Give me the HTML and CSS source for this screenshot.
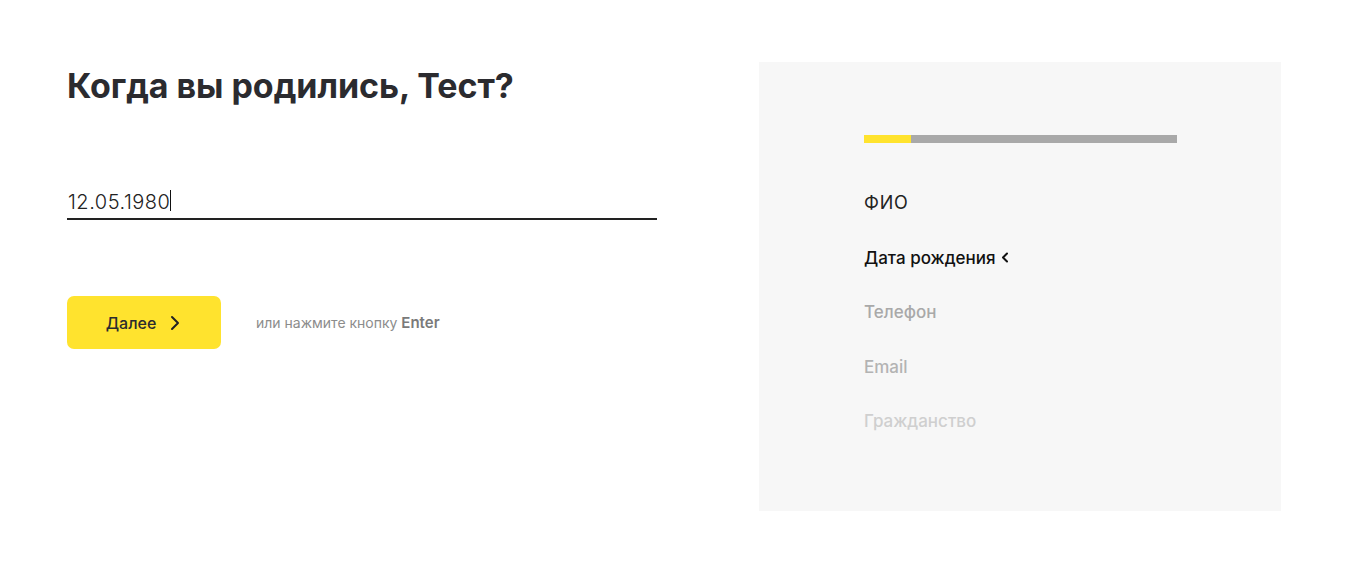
FILE: index.html
```html
<!DOCTYPE html>
<html lang="ru">
<head>
    <meta charset="UTF-8">
    <title>Анкета</title>
    <link rel="stylesheet" href="styles.css">
</head>
<body>
    <div class="page">
        <div class="form">
            <h1 class="title">Когда вы родились, Тест?</h1>

            <div class="field">
                <span class="field-value">12.05.1980</span><span class="caret"></span>
            </div>

            <div class="actions">
                <button class="next" type="button">
                    <span>Далее</span>
                    <svg width="10" height="16" viewBox="0 0 10 16" fill="none" stroke="#222" stroke-width="2" stroke-linecap="round" stroke-linejoin="round">
                        <polyline points="2 2 8 8 2 14"/>
                    </svg>
                </button>
                <p class="hint">или нажмите кнопку <b>Enter</b></p>
            </div>
        </div>

        <div class="steps">
            <div class="progress"><div class="progress-fill"></div></div>
            <ul class="step-list">
                <li class="step done">ФИО</li>
                <li class="step current">Дата рождения
                    <svg width="8" height="11" viewBox="0 0 8 11" fill="none" stroke="#111" stroke-width="2" stroke-linecap="round" stroke-linejoin="round">
                        <polyline points="6 1.5 2 5.5 6 9.5"/>
                    </svg>
                </li>
                <li class="step next1">Телефон</li>
                <li class="step next2">Email</li>
                <li class="step next3">Гражданство</li>
            </ul>
        </div>
    </div>
</body>
</html>
```

FILE: styles.css
```css
body {
    margin: 0;
    background-color: #fff;
    font-family: Inter, "Noto Sans", sans-serif;
    color: #2b2b2f;
}
.page {
    display: flex;
    padding: 62px 0 0 67px;
    gap: 102px;
}
.form {
    width: 590px;
}
.title {
    margin: 0;
    padding-top: 2px;
    font-size: 34px;
    line-height: 44px;
    font-weight: 700;
    letter-spacing: -0.05px;
    color: #2b2b2f;
}
.field {
    margin-top: 77px;
    height: 30px;
    padding: 3px 0 0 1px;
    border-bottom: 2px solid #222;
    display: flex;
    align-items: flex-start;
}
.field-value {
    font-size: 20px;
    line-height: 28px;
    font-weight: 300;
    color: #222;
    letter-spacing: 0.5px;
}
.caret {
    display: inline-block;
    width: 1px;
    height: 21px;
    margin-top: 2px;
    background-color: #111;
}
.actions {
    display: flex;
    align-items: center;
    margin-top: 76px;
    gap: 35px;
}
.next {
    width: 154px;
    height: 53px;
    border: none;
    border-radius: 7px;
    background-color: #ffe32e;
    display: flex;
    justify-content: center;
    align-items: center;
    gap: 14px;
    font-family: Inter, "Noto Sans", sans-serif;
    font-size: 16px;
    font-weight: 500;
    color: #2b2b2f;
    cursor: pointer;
    padding: 0 2px 0 0;
}
.hint {
    margin: 0;
    font-size: 14px;
    color: #8c8c8c;
}
.hint b {
    font-size: 15px;
    font-weight: 600;
    color: #7a7a7a;
}
.steps {
    width: 417px;
    height: 376px;
    background-color: #f7f7f7;
    padding: 73px 0 0 105px;
}
.progress {
    width: 313px;
    height: 8px;
    background-color: #a9a9a9;
}
.progress-fill {
    width: 47px;
    height: 100%;
    background-color: #ffe32e;
}
.step-list {
    list-style: none;
    margin: 48px 0 0;
    padding: 0;
    display: flex;
    flex-direction: column;
    gap: 30.5px;
}
.step {
    font-size: 17px;
    line-height: 24px;
    display: flex;
    align-items: center;
    gap: 5px;
}
.done {
    color: #222;
    font-size: 18px;
    letter-spacing: 0.8px;
}
.current {
    color: #111;
    font-weight: 500;
}
.next1 {
    color: #a9a9a9;
    font-weight: 500;
}
.next2 {
    color: #b3b3b3;
    font-weight: 500;
}
.next3 {
    color: #cfcfcf;
    font-weight: 500;
}
```
